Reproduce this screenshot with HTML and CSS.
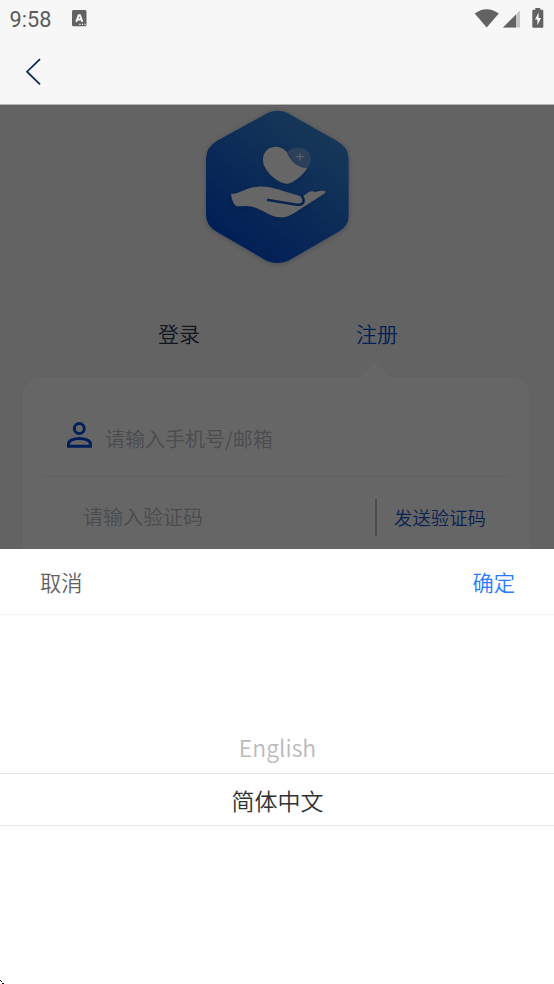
FILE: index.html
```html
<!DOCTYPE html>
<html lang="zh-CN">
<head>
<meta charset="utf-8">
<title>注册</title>
<link rel="stylesheet" href="styles.css">
</head>
<body>
<div class="app">
  <header class="header">
    <div class="status">
      <span class="clock">9:58</span>
      <svg class="ime" viewBox="0 0 15 17" width="15" height="17">
        <rect width="14.5" height="16.3" rx="1.5" fill="#626262"/>
        <path d="M4.2 11.8L6.700 5.200H7.900L10.400 11.800M5.400 9.5H9.200" fill="none" stroke="#f7f7f7" stroke-width="1.9"/>
        <path d="M7.3 14.4h1.2M9.8 14.4H11M12.3 14.4h1.2" stroke="#f7f7f7" stroke-width="1.1"/>
      </svg>
      <svg class="signals" viewBox="474 6 72 24" width="72" height="24">
        <path d="M474.7 13.6Q486.7 5 498.8 13.6L486.7 27.5Z" fill="#626262"/>
        <path d="M503 27.5L520 10.5V27.5Z" fill="#c5c5c5"/>
        <path d="M503 27.5L516 14.5V27.5Z" fill="#626262"/>
        <path d="M535.3 8h5v1.8h2q1 0 1 1V26.7q0 1-1 1h-9q-1 0-1-1V10.800q0-1 1-1h2z" fill="#626262"/>
        <path d="M538.600 12.500L535 19.500H537.400V25.300L541 17.900H538.600Z" fill="#f7f7f7"/>
      </svg>
    </div>
    <nav class="nav">
      <svg viewBox="0 0 20 28" width="20" height="28"><path d="M16 1.200L3 13.700L16 26.300" fill="none" stroke="#0b2558" stroke-width="1.700"/></svg>
    </nav>
  </header>
  <main class="stage">
    <svg class="logo" viewBox="0 15 495 510" width="165" height="170">
      <defs>
        <linearGradient id="blue" x1=".2" y1=".95" x2=".8" y2=".1"><stop stop-color="#004bd8"/><stop offset="1" stop-color="#3a8bdc"/></linearGradient>
        <filter id="glow" x="-20%" y="-20%" width="140%" height="140%"><feDropShadow dx="0" dy="3" stdDeviation="8" flood-color="#002a70" flood-opacity=".3"/></filter>
      </defs>
      <path filter="url(#glow)" fill="url(#blue)" d="M218 39Q247 26 278 39L426 123Q461 142 461 177V347Q461 380 428 397L280 482Q247 496 215 482L68 397Q33 378 33 345V177Q33 142 65 123Z"/>
      <g filter="url(#glow)">
        <path fill="#fff" d="M276 157C250 127 204 139 204 180C204 213 250 251 276 251C295 251 322 226 337 205C312 204 285 185 276 157Z"/>
        <path fill="#fff" d="M108 282C135 282 155 260 190 260C235 258 270 278 322 290L342 276Q353 271 360 277Q371 271 389 273Q396 275 387 281L294 341Q266 358 237 349C204 337 185 317 153 318L129 319Q113 319 108 282Z"/>
      </g>
      <path d="M276 157C285 187 312 205 337 205C352 189 350 166 339 155C325 137 292 139 276 157Z" fill="#8fb3e8" opacity=".65"/>
      <path d="M315 158V182M303 170H327" stroke="#e1eaff" stroke-width="4"/>
      <path d="M219 300L306 314C330 317 329 298 320 288" fill="none" stroke="#1559c7" stroke-width="7.500" stroke-linecap="round"/>
    </svg>
    <div class="tabs">
      <span class="tab">登录</span>
      <span class="tab active">注册</span>
    </div>
    <section class="card">
      <div class="row account">
        <svg class="user" viewBox="0 0 28 30" width="28" height="30"><g fill="none" stroke="#004fe0" stroke-width="3"><circle cx="13.300" cy="7.500" r="5"/><path d="M2.500 25.200V23C2.500 19.500 8 17.500 13.400 17.500S24.400 19.500 24.400 23V25.200Z"/></g></svg>
        <span class="hint">请输入手机号/邮箱</span>
      </div>
      <div class="row code">
        <span class="hint">请输入验证码</span>
        <span class="send">发送验证码</span>
      </div>
    </section>
    <div class="mask"></div>
  </main>
  <section class="sheet">
    <div class="actions"><span class="cancel">取消</span><span class="confirm">确定</span></div>
    <div class="picker">
      <div class="option">English</div>
      <div class="option selected">简体中文</div>
    </div>
    <svg class="corner" viewBox="0 0 4 4" width="4" height="4"><path d="M0 0h1v1H0zM1 1h1v1H1zM2 3h2v1H2z" fill="#111"/></svg>
  </section>
</div>
</body>
</html>
```
FILE: styles.css
```css
* { box-sizing: border-box; }
body { margin: 0; font-family: "Noto Sans CJK SC", sans-serif; font-weight: 350; }
svg { display: block; flex: none; }
.app { width: 554px; height: 984px; display: flex; flex-direction: column; overflow: hidden; background: #fff; }
.header { height: 105px; flex: none; background: #f7f7f7; border-bottom: 1px solid #b4b4b4; }
.status { height: 38px; display: flex; align-items: center; padding: 0 8px 0 9px; }
.clock { width: 63px; font: 450 21.7px/38px Roboto, sans-serif; color: #5c5c5c; padding: 2px 0 0 .5px; }
.ime { margin-top: -1px; }
.signals { margin-left: auto; margin-top: -2px; }
.nav { height: 66px; display: flex; align-items: center; padding: 1px 0 0 23.5px; }
.stage { position: relative; height: 444px; flex: none; overflow: hidden; background: #f8f8f8; }
.logo { margin-left: 195px; }
.tabs { height: 102px; display: grid; grid-template-columns: 198px 198px; padding: 42px 0 0 80px; text-align: center; font-size: 21px; line-height: 32px; }
.tab { color: #2b3553; }
.tab.active { color: #0050dc; position: relative; }
.tab.active::after { content: ""; position: absolute; left: 82px; top: 46px; border: 15px solid transparent; border-top: 0; border-bottom: 15px solid #fff; }
.card { margin: 0 23px 0 22px; height: 230px; border-radius: 20px; background: #fff; padding: 0 22px 0 20px; box-shadow: 0 0 4px rgba(0, 0, 0, .06); }
.row { display: flex; align-items: center; font-size: 20px; line-height: 30px; }
.account { height: 100px; padding: 24px 0 0 24px; border-bottom: 1px solid #f0f0f0; }
.user { margin: -6px 11px 0 0; }
.hint { color: #b9bdc4; }
.code { height: 80px; padding-left: 41px; }
.send { height: 37px; margin-left: auto; padding: 0 23px 0 17px; border-left: 2px solid #bcbcbc; color: #1756ce; font-size: 18.400px; line-height: 37px; }
.mask { position: absolute; inset: 0; background: rgba(0, 0, 0, .6); }
.sheet { position: relative; flex: 1; background: #fff; }
.actions { height: 66px; display: flex; justify-content: space-between; padding: 0 39px 0 40px; border-bottom: 1px solid #f3f3f3; font-size: 21.2px; line-height: 66px; }
.cancel { color: #606266; }
.confirm { color: #2979ff; }
.picker { padding: 106px 0 0 1px; text-align: center; font-size: 23px; }
.option { height: 52px; line-height: 53px; color: #bbb; }
.option.selected { height: 53px; margin-left: -1px; padding-left: 1px; line-height: 52px; border: solid #e7e7e7; border-width: 1px 0; color: #303133; }
.corner { position: absolute; left: 0; bottom: 0; }
```
